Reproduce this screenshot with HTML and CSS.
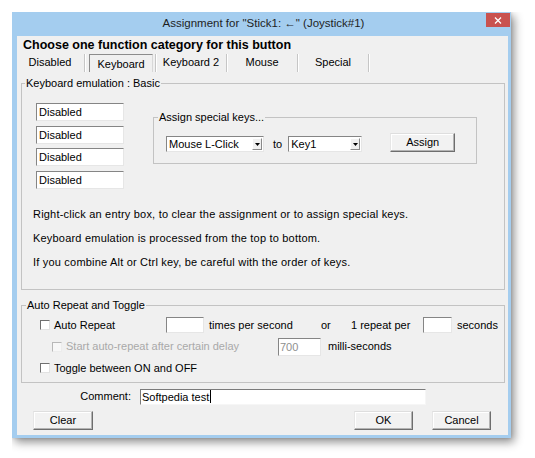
FILE: index.html
```html
<!DOCTYPE html>
<html>
<head>
<meta charset="utf-8">
<link rel="stylesheet" href="styles.css">
</head>
<body>
<div class="window">
  <div class="titlebar">
    <div class="title">Assignment for "Stick1: ←" (Joystick#1)</div>
    <div class="close"><svg width="8" height="7" viewBox="0 0 8 7"><path d="M1 0.5 L7 6.5 M7 0.5 L1 6.5" stroke="#fff" stroke-width="1.3" fill="none"/></svg></div>
  </div>
  <div class="client">
    <div class="heading">Choose one function category for this button</div>
    <div class="tabs">
      <div class="tab first">Disabled</div>
      <div class="tab selected"><span class="tabbox">Keyboard</span></div>
      <div class="tab">Keyboard 2</div>
      <div class="tab">Mouse</div>
      <div class="tab">Special</div>
    </div>

    <fieldset class="group kb">
      <legend>Keyboard emulation : Basic</legend>
      <div class="kb-body">
        <div class="kb-top">
          <div class="entries">
            <div class="field entry">Disabled</div>
            <div class="field entry">Disabled</div>
            <div class="field entry">Disabled</div>
            <div class="field entry">Disabled</div>
          </div>
          <fieldset class="group special">
            <legend>Assign special keys...</legend>
            <div class="special-row">
              <div class="field combo c-mouse"><span>Mouse L-Click</span><span class="arrow"><svg width="5" height="3" viewBox="0 0 5 3"><path d="M0 0 H5 L2.5 3 Z" fill="#000"/></svg></span></div>
              <span class="to">to</span>
              <div class="field combo c-key"><span>Key1</span><span class="arrow"><svg width="5" height="3" viewBox="0 0 5 3"><path d="M0 0 H5 L2.5 3 Z" fill="#000"/></svg></span></div>
              <div class="btn assign">Assign</div>
            </div>
          </fieldset>
        </div>
        <p class="note first-note">Right-click an entry box, to clear the assignment or to assign special keys.</p>
        <p class="note">Keyboard emulation is processed from the top to bottom.</p>
        <p class="note">If you combine Alt or Ctrl key, be careful with the order of keys.</p>
      </div>
    </fieldset>

    <fieldset class="group auto">
      <legend>Auto Repeat and Toggle</legend>
      <div class="auto-body">
        <div class="row row1">
          <label class="cb-label w1"><span class="cb"></span>Auto Repeat</label>
          <span class="field num n1"></span>
          <span class="txt t-times">times per second</span>
          <span class="txt t-or">or</span>
          <span class="txt t-rep">1 repeat per</span>
          <span class="field num n2"></span>
          <span class="txt t-sec">seconds</span>
        </div>
        <div class="row row2">
          <label class="cb-label w2 disabled"><span class="cb"></span>Start auto-repeat after certain delay</label>
          <span class="field num n3">700</span>
          <span class="txt t-milli">milli-seconds</span>
        </div>
        <div class="row row3">
          <label class="cb-label"><span class="cb"></span>Toggle between ON and OFF</label>
        </div>
      </div>
    </fieldset>

    <div class="comment-row">
      <span class="comment-label">Comment:</span>
      <div class="field comment-input">Softpedia test<span class="caret"></span></div>
    </div>

    <div class="button-row">
      <div class="btn b-clear">Clear</div>
      <div class="btn b-ok">OK</div>
      <div class="btn b-cancel">Cancel</div>
    </div>
  </div>
</div>
</body>
</html>
```

FILE: styles.css
```css
* { box-sizing: border-box; }

html, body {
  background: #ffffff;
}

body {
  margin: 12px 0 0 12px;
  width: 523px;
  height: 446px;
  overflow: hidden;
  font-family: "Liberation Sans", Arial, sans-serif;
  font-size: 11px;
  line-height: 13px;
  color: #000;
}

.window {
  width: 499px;
  height: 426px;
  background: #a4cdef;
  display: flex;
  flex-direction: column;
  box-shadow: 3px 4px 9px rgba(0, 0, 0, 0.45), 0 0 3px rgba(0, 0, 0, 0.15);
}

.titlebar {
  height: 24px;
  display: grid;
  grid-template-columns: 1fr auto 1fr;
  align-items: center;
}

.title {
  grid-column: 2;
  font-size: 11.5px;
  color: #1e1e1e;
  padding-left: 4px;
  padding-bottom: 1px;
  white-space: nowrap;
}

.close {
  grid-column: 3;
  justify-self: end;
  align-self: start;
  width: 24px;
  height: 14px;
  margin: 1px 1px 0 0;
  background: #c9524f;
  display: flex;
  align-items: center;
  justify-content: center;
}

.client {
  flex: 1;
  margin: 0 3px 3px 5px;
  background: #f0f0f0;
  padding: 0 3px 0 4px;
  display: flex;
  flex-direction: column;
}

.heading {
  margin-top: 2px;
  padding-left: 2px;
  font-weight: bold;
  font-size: 12.5px;
  line-height: 14px;
  white-space: nowrap;
}

.tabs {
  display: flex;
  height: 18px;
  margin-top: 2px;
}

.tab {
  width: 71px;
  height: 18px;
  border-right: 1px solid #c6c6c6;
  box-shadow: 1px 0 0 #ffffff;
  text-align: center;
  line-height: 17px;
  white-space: nowrap;
}

.tab.first {
  width: 64px;
  padding-right: 5px;
}

.tab.selected {
  padding: 0 2px 0 4px;
}

.tabbox {
  display: block;
  height: 18px;
  border-top: 1px solid #8c8c8c;
  border-left: 1px solid #8c8c8c;
  border-right: 1px solid #d8d8d8;
  line-height: 18px;
}

/* group boxes */
.group {
  margin: 0;
  padding: 0;
  min-width: 0;
  border: 1px solid #c3c3c3;
}

.group > legend {
  padding: 0 1px;
  line-height: 13px;
  white-space: nowrap;
}

.kb {
  margin-top: 5px;
}

.kb > legend {
  margin-left: 3px;
}

.kb-body {
  padding: 13px 0 20px 14px;
}

.kb-top {
  display: flex;
  align-items: flex-start;
}

.entries {
  display: flex;
  flex-direction: column;
  gap: 4.67px;
}

.field {
  background: #ffffff;
  border: 1px solid;
  border-color: #858585 #e6e6e6 #e6e6e6 #858585;
  white-space: nowrap;
}

.entry {
  width: 88px;
  height: 18px;
  padding-left: 2px;
  line-height: 16px;
}

.special {
  width: 324px;
  margin-left: 29px;
  margin-top: 8px;
}

.special > legend {
  margin-left: 4px;
}

.special-row {
  display: flex;
  align-items: flex-end;
  padding: 9px 0 11px 12px;
}

.combo {
  height: 16px;
  display: flex;
  justify-content: space-between;
  align-items: center;
  padding-left: 2px;
  line-height: 14px;
}

.c-mouse { width: 98px; }
.c-key { width: 74px; }

.arrow {
  width: 10px;
  height: 12px;
  margin-right: 1px;
  background: #f0f0f0;
  border: 1px solid;
  border-color: #ffffff #8a8a8a #8a8a8a #ffffff;
  display: flex;
  align-items: center;
  justify-content: center;
}

.to {
  margin: 0 6px 1px 9px;
  line-height: 14px;
}

.btn {
  background: #f2f2f2;
  border: 1px solid;
  border-color: #dedede #6e6e6e #6e6e6e #e6e6e6;
  box-shadow: inset -1px -1px 0 #b4b4b4, inset 1px 1px 0 #ffffff;
  text-align: center;
  height: 19px;
  line-height: 17px;
}

.assign {
  width: 65px;
  margin-left: 28px;
}

.note {
  margin: 11px 0 0 -3px;
  line-height: 13px;
  letter-spacing: 0.2px;
  white-space: nowrap;
}

.note.first-note {
  margin-top: 19px;
}

/* auto repeat */
.auto {
  margin-top: 9px;
}

.auto > legend {
  margin-left: 4px;
}

.auto-body {
  padding: 3px 0 3px 18px;
}

.row {
  display: flex;
  align-items: center;
  white-space: nowrap;
}

.row1 { height: 21px; }
.row2 { height: 22px; padding-left: 12px; }
.row3 { height: 21px; }

.cb-label {
  display: flex;
  align-items: center;
  gap: 4px;
}

.cb {
  width: 10px;
  height: 10px;
  background: #ffffff;
  border: 1px solid;
  border-color: #6f6f6f #e2e2e2 #e2e2e2 #6f6f6f;
}

.cb-label.disabled {
  color: #a9a9a9;
}

.cb-label.disabled .cb {
  background: #f7f7f7;
  border-color: #b8b8b8 #ececec #ececec #b8b8b8;
}

.w1 { width: 126px; }
.w2 { width: 226px; }

.num {
  height: 16px;
  line-height: 14px;
  padding-left: 1px;
}

.n1 { width: 38px; }
.n2 { width: 29px; }
.n3 {
  width: 43px;
  height: 18px;
  line-height: 16px;
  color: #8f8f8f;
}

.t-times { margin-left: 5px; width: 112px; }
.t-or { width: 30px; }
.t-rep { width: 72px; }
.t-sec { margin-left: 5px; }
.t-milli { margin-left: 7px; }

/* comment */
.comment-row {
  display: flex;
  align-items: center;
  margin-top: 6px;
  height: 16px;
}

.comment-label {
  width: 110px;
  text-align: right;
}

.comment-input {
  margin-left: 9px;
  width: 286px;
  height: 16px;
  line-height: 14px;
  padding-left: 1px;
  display: flex;
  align-items: center;
  border-color: #7b7b7b #f6f6f6 #f6f6f6 #7b7b7b;
}

.caret {
  display: inline-block;
  width: 1px;
  height: 13px;
  background: #000;
  margin-left: 1px;
}

/* buttons */
.button-row {
  display: flex;
  margin-top: 6px;
}

.b-clear {
  width: 60px;
  margin-left: 12px;
}

.b-ok {
  width: 59px;
  margin-left: auto;
}

.b-cancel {
  width: 59px;
  margin-left: 19px;
  margin-right: 14px;
}
```
